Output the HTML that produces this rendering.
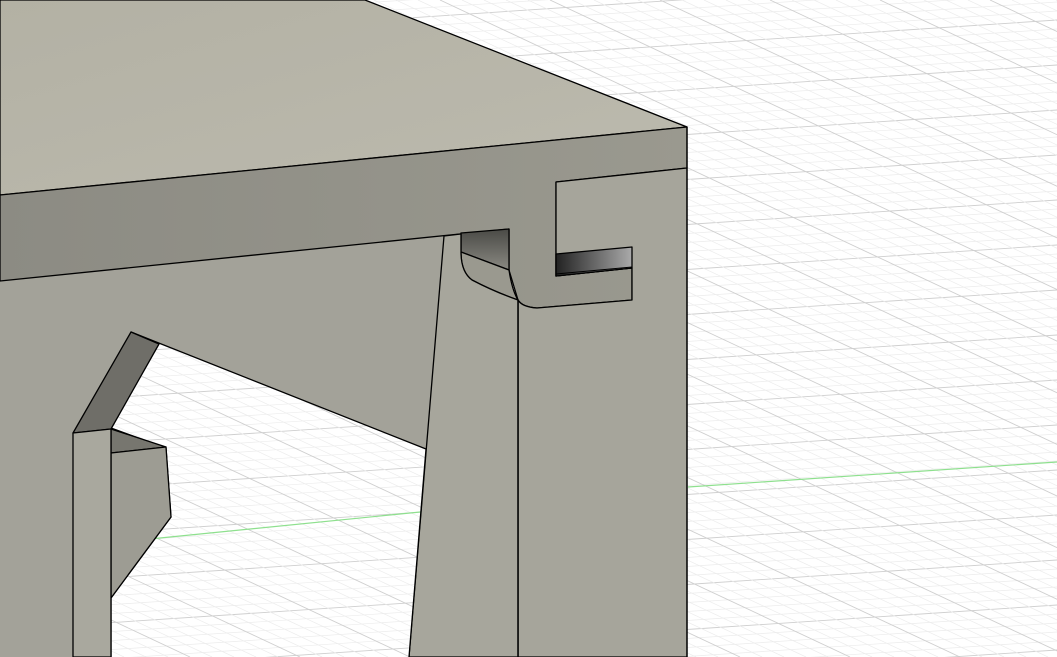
<!DOCTYPE html>
<html><head><meta charset="utf-8"><style>
html,body{margin:0;padding:0;background:#fff;overflow:hidden;width:1057px;height:657px}
svg{display:block;position:absolute;left:0;top:0}
</style></head><body>
<svg id="s" width="1057" height="657" viewBox="0 0 1057 657" xmlns="http://www.w3.org/2000/svg">
<defs>
<linearGradient id="top" x1="0" y1="0" x2="1" y2="1">
<stop offset="0" stop-color="#b3b1a4"/><stop offset="1" stop-color="#bcbaae"/></linearGradient>
<linearGradient id="apron" x1="0" y1="0" x2="1" y2="0">
<stop offset="0" stop-color="#8c8b83"/><stop offset="1" stop-color="#9a998f"/></linearGradient>
<linearGradient id="slot" x1="0" y1="0" x2="1" y2="0">
<stop offset="0" stop-color="#222"/><stop offset="1" stop-color="#aaa"/></linearGradient>
<linearGradient id="cav" x1="0" y1="0" x2="0" y2="1">
<stop offset="0" stop-color="#4a4a46"/><stop offset="1" stop-color="#8a8982"/></linearGradient>
</defs>
<rect width="1057" height="657" fill="#fff"/>
<g id="grid"></g>
<line x1="688" y1="487" x2="1057" y2="462" stroke="#8ee08e" stroke-width="1.2"/>
<g stroke="#000" stroke-width="1.3" stroke-linejoin="round">
<path d="M0 281 L509 229 L509 657 L0 657 Z" fill="#a3a299" stroke="none"/>
<path d="M0 0 L365 0 L687 127 L0 195 Z" fill="url(#top)"/>
<path d="M0 195 L687 127 L687 168 L556 182 L556 276 L632 268 L632 300 L537 308 Q522 307 518 300 L509 270 L509 229 L0 281 Z" fill="url(#apron)"/>
<path d="M556 182 L687 168 L687 657 L518 657 L518 300 Q522 307 537 308 L632 300 L632 268 L556 276 Z" fill="#a6a59b"/>
<path d="M556 254 L632 247 L632 268 L556 276 Z" fill="url(#slot)"/>
<line x1="556" y1="274" x2="632" y2="267" stroke-width="1"/>
<path d="M461 233 L509 229 L509 270 L461 252 Z" fill="url(#cav)"/>
<path d="M461 252 L509 270 Q512 290 518 300 L518 300 Q490 290 472 280 Q461 272 461 252 Z" fill="#9a998f"/>
<path d="M444 236 L461 234 L461 252 Q461 272 472 280 Q495 292 518 300 L518 657 L409 657 Z" fill="#a7a69c"/>
<path d="M131 332 L426 449 L409 657 L111 657 L111 598 L171 517 L166 448 L111 428 L159 344 Z" fill="#fff" stroke="none"/>
</g>
<g id="grid2"></g>
<g clip-path="url(#op)"><line x1="150" y1="539" x2="430" y2="511" stroke="#8ee08e" stroke-width="1.2"/></g>
<g stroke="#000" stroke-width="1.3" stroke-linejoin="round" fill="none">
<path d="M159 344 L131 332 L426 449 L409 657"/>
<path d="M111 657 L111 598 L171 517 L166 448 L111 428"/>
<path d="M73 433 L131 332 L159 344 L111 429 Z" fill="#6f6e68"/>
<path d="M111 429 L166 447 L111 453 Z" fill="#77766f"/>
<path d="M111 453 L166 447 L171 517 L111 598 Z" fill="#9d9c93"/>
<path d="M73 433 L111 429 L111 657 L73 657 Z" fill="#a9a89e"/>
<line x1="518" y1="300" x2="518" y2="657"/>
<line x1="687" y1="127" x2="687" y2="657"/>
</g>
<clipPath id="op"><path d="M131 332 L426 449 L409 657 L111 657 L111 598 L171 517 L166 448 L111 428 L159 344 Z"/></clipPath>
<clipPath id="rt"><path d="M365 0 L1057 0 L1057 657 L687 657 L687 127 Z"/></clipPath>
<script>
(function(){
var ns="http://www.w3.org/2000/svg";
function mk(g,clip){
 var G=document.getElementById(g);
 for(var i=-60;i<120;i++){
  var y0=i*9; var l=document.createElementNS(ns,"line");
  l.setAttribute("x1",0);l.setAttribute("y1",y0);l.setAttribute("x2",1057);l.setAttribute("y2",y0-70);
  l.setAttribute("stroke",i%5==0?"#cfcfcf":"#ececec");l.setAttribute("stroke-width",i%5==0?0.9:0.7);G.appendChild(l);
 }
 for(var j=-80;j<60;j++){
  var x0=j*22; var l=document.createElementNS(ns,"line");
  l.setAttribute("x1",x0);l.setAttribute("y1",0);l.setAttribute("x2",x0+1400);l.setAttribute("y2",657);
  l.setAttribute("stroke",j%5==0?"#cfcfcf":"#ececec");l.setAttribute("stroke-width",j%5==0?0.9:0.7);G.appendChild(l);
 }
 G.setAttribute("clip-path","url(#"+clip+")");
}
mk("grid","rt");mk("grid2","op");
})();
</script>
</svg>
</body></html>
